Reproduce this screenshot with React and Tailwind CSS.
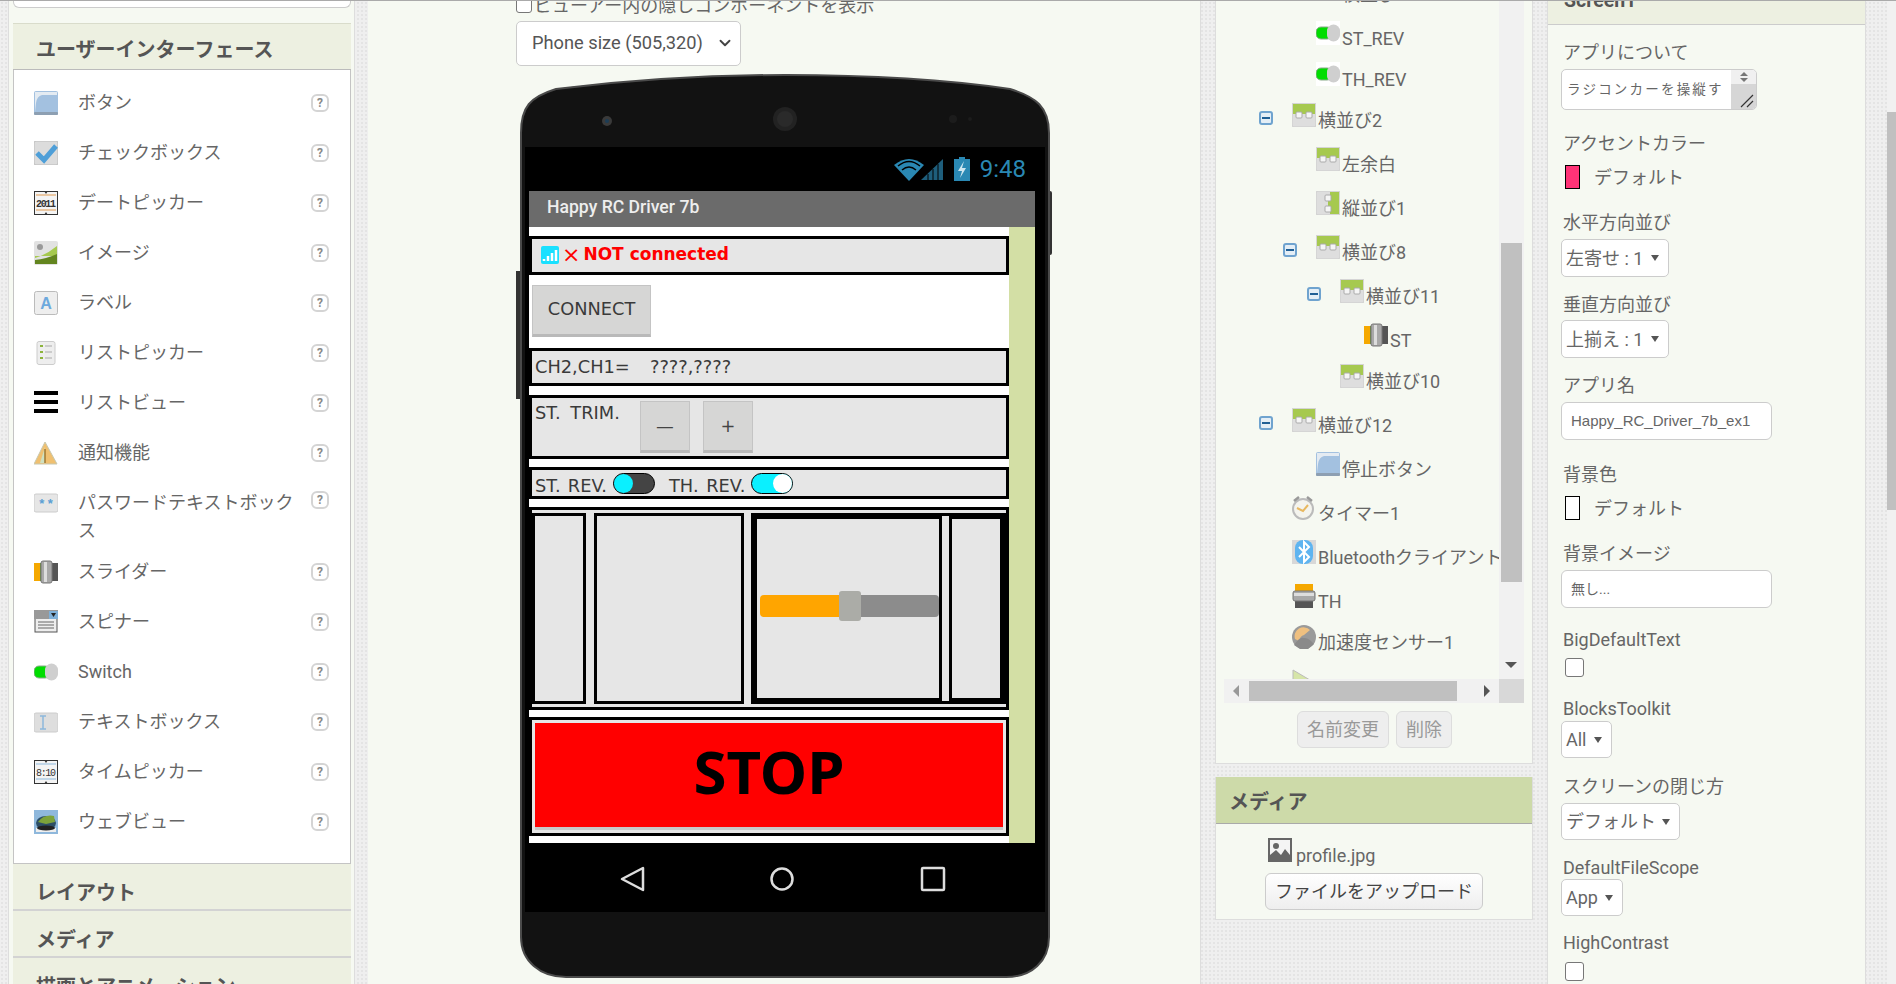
import { ChevronDown } from "lucide-react";

function IconWrap({ children, className = "" }) {
  return (
    <svg viewBox="0 0 24 24" className={`w-6 h-6 shrink-0 ${className}`}>
      {children}
    </svg>
  );
}

const ButtonIcon = () => (
  <IconWrap>
    <rect width="24" height="24" rx="2" fill="#a3c1e0" />
    <path d="M1 1h22v3H8Q3 5 2 12L1 21Z" fill="#e4ebf2" />
    <rect y="21" width="24" height="3" rx="1" fill="#8d9fb2" />
  </IconWrap>
);
const CheckIcon = () => (
  <IconWrap>
    <rect width="24" height="24" rx="2" fill="#dcdcdc" stroke="#bbb" />
    <path d="M3 12l7 7L22 5" fill="none" stroke="#4f9fd8" strokeWidth="5" />
  </IconWrap>
);
const DateIcon = () => (
  <IconWrap>
    <rect x="0.5" y="0.5" width="23" height="23" fill="#f4f4f4" stroke="#333" />
    <path d="M2 4h20M2 19h20" stroke="#e09a50" />
    <path d="M10 0h4l-2 3zM10 24h4l-2-3z" fill="#333" />
    <text x="12" y="16" textAnchor="middle" fontSize="10" fontFamily="Liberation Mono" fontWeight="700" fill="#333" textLength="20">2011</text>
  </IconWrap>
);
const ImageIcon = () => (
  <IconWrap>
    <rect width="24" height="24" rx="2" fill="#e2e2e2" />
    <circle cx="6" cy="6" r="3" fill="#999" />
    <path d="M1 17Q12 14 23 5V15H1Z" fill="#a6c94f" />
    <path d="M1 19Q12 18 23 13V23H1Z" fill="#63851f" />
  </IconWrap>
);
const LabelIcon = () => (
  <IconWrap>
    <rect x="0.5" y="0.5" width="23" height="23" rx="2" fill="#eee" stroke="#bbb" />
    <text x="12" y="18" textAnchor="middle" fontSize="16" fontWeight="700" fontFamily="Liberation Sans" fill="#6da9dd">A</text>
  </IconWrap>
);
const ListPickerIcon = () => (
  <IconWrap>
    <rect x="3" y="0.5" width="18" height="23" rx="2" fill="#eee" stroke="#ccc" />
    <path d="M6 5h3M6 11h3M6 17h3" stroke="#8cb43c" strokeWidth="2" />
    <path d="M11 5h7M11 11h7M11 17h7" stroke="#aaa" />
  </IconWrap>
);
const ListViewIcon = () => (
  <IconWrap>
    <path d="M0 2h24M0 11h24M0 20h24" stroke="#000" strokeWidth="4" />
  </IconWrap>
);
const NotifierIcon = () => (
  <IconWrap>
    <path d="M11 1L0 23h23Z" fill="#f0c070" stroke="#c8c8b0" />
    <path d="M11 6L6 22h5Z" fill="#cfe0c0" />
    <path d="M11 8v14" stroke="#a07830" strokeWidth="1.5" />
  </IconWrap>
);
const PasswordIcon = () => (
  <IconWrap>
    <rect y="3" width="24" height="18" rx="2" fill="#e6e6e6" stroke="#ccc" />
    <text x="12" y="17" textAnchor="middle" fontSize="13" fontWeight="700" fontFamily="Liberation Sans" fill="#5a9fd4">* *</text>
  </IconWrap>
);
const SliderIcon = () => (
  <IconWrap>
    <rect y="3" width="7" height="18" fill="#f5a800" />
    <rect x="6" y="3" width="2" height="18" fill="#6b8c2a" />
    <rect x="15" y="3" width="9" height="18" fill="#555" />
    <rect x="7" y="1" width="11" height="22" rx="2" fill="#a8a8a8" stroke="#777" />
    <rect x="10" y="2" width="3" height="20" fill="#ddd" />
  </IconWrap>
);
const SpinnerIcon = () => (
  <IconWrap>
    <rect x="1" y="1" width="22" height="21" fill="#eee" stroke="#555" />
    <rect y="0" width="24" height="9" fill="#999" />
    <rect x="15" y="1" width="9" height="8" fill="#7fb0d8" />
    <path d="M17 3h5l-2.500 4z" fill="#222" />
    <path d="M4 12h16M4 15h16M4 18h16" stroke="#666" />
  </IconWrap>
);
const SwitchIcon = () => (
  <IconWrap>
    <rect x="0" y="6" width="16" height="12" rx="5" fill="#00dd00" stroke="#8a8" />
    <circle cx="17.500" cy="12" r="6.500" fill="#cfcfcf" />
    <rect x="11" y="3.500" width="13" height="17" rx="6.500" fill="#cfcfcf" />
  </IconWrap>
);
const TextBoxIcon = () => (
  <IconWrap>
    <rect y="3" width="24" height="19" rx="2" fill="#dedede" stroke="#ccc" />
    <path d="M6 6h6M6 19h6M9 6v13" stroke="#8db8dc" strokeWidth="1.500" fill="none" />
  </IconWrap>
);
const TimeIcon = () => (
  <IconWrap>
    <rect x="0.500" y="0.500" width="23" height="23" fill="#f4f4f4" stroke="#333" />
    <path d="M2 4h20M2 19h20" stroke="#8db8dc" />
    <path d="M10 0h4l-2 3zM10 24h4l-2-3z" fill="#333" />
    <text x="12" y="16" textAnchor="middle" fontSize="10" fontFamily="Liberation Mono" fill="#333" textLength="20">8:10</text>
  </IconWrap>
);
const WebIcon = () => (
  <IconWrap>
    <rect width="24" height="24" fill="#8fb8dc" />
    <rect x="2" y="18" width="20" height="4" fill="#eee" />
    <ellipse cx="12" cy="13" rx="10" ry="7" fill="#2d4e66" />
    <path d="M4 12Q10 4 20 6l1 6-9 2z" fill="#7da33a" />
    <ellipse cx="12" cy="18" rx="9" ry="2.500" fill="#222" />
  </IconWrap>
);
const HorizontalIcon = () => (
  <IconWrap>
    <rect width="24" height="24" rx="2" fill="#dedede" stroke="#ccc" />
    <path d="M1 1h22v10H1Z" fill="#a6c94f" />
    <rect x="4" y="9" width="6" height="6" rx="1" fill="#f5f5f5" stroke="#aaa" />
    <rect x="14" y="9" width="6" height="6" rx="1" fill="#f5f5f5" stroke="#aaa" />
  </IconWrap>
);
const VerticalIcon = () => (
  <IconWrap>
    <rect width="24" height="24" rx="2" fill="#dedede" stroke="#ccc" />
    <path d="M14 1h9v22h-9V17h-2V8h2Z" fill="#a6c94f" />
    <rect x="9" y="4" width="6" height="6" rx="1" fill="#f5f5f5" stroke="#aaa" />
    <rect x="9" y="15" width="6" height="6" rx="1" fill="#f5f5f5" stroke="#aaa" />
  </IconWrap>
);
const ClockIcon = () => (
  <IconWrap>
    <circle cx="11" cy="13" r="10" fill="#f4f4ee" stroke="#bbb" strokeWidth="2" />
    <path d="M2 5l5-4M20 5l-5-4" stroke="#999" strokeWidth="2.500" />
    <path d="M5 12l6 3 5-6" fill="none" stroke="#e8b860" strokeWidth="2" />
  </IconWrap>
);
const BluetoothIcon = () => (
  <IconWrap>
    <rect width="24" height="24" fill="#d8d8d8" />
    <rect x="3" width="18" height="24" rx="8" fill="#5eb4f0" />
    <path d="M7 7l10 10-5 5V2l5 5L7 17" fill="none" stroke="#fff" strokeWidth="2" />
  </IconWrap>
);
const VSliderIcon = () => (
  <IconWrap>
    <rect x="3" y="0" width="18" height="7" fill="#f5a800" />
    <rect x="3" y="15" width="18" height="9" fill="#555" />
    <rect x="1" y="7" width="22" height="10" rx="2" fill="#a8a8a8" stroke="#777" />
    <rect x="2" y="9" width="20" height="3" fill="#ddd" />
  </IconWrap>
);
const AccelIcon = () => (
  <IconWrap>
    <circle cx="12" cy="12" r="12" fill="#9a9a9a" />
    <path d="M3 14A9 9 0 0 1 18 5l-6 5Q8 11 7 16Z" fill="#efc080" />
    <path d="M2 20Q8 11 12 13q4-1 10 6l-6 5H8Z" fill="#8a8a8a" />
  </IconWrap>
);
const FolderTriangle = () => (
  <IconWrap>
    <path d="M1 1l22 13v10H1Z" fill="#d6e5a8" stroke="#bbb" />
  </IconWrap>
);
const MediaIcon = () => (
  <IconWrap>
    <rect width="24" height="24" fill="#666" />
    <rect x="2" y="2" width="20" height="20" fill="#f4f4f4" />
    <path d="M2 22V17l6-5 5 5 4-6 5 6v5Z" fill="#666" />
    <circle cx="8" cy="8" r="3" fill="#666" />
  </IconWrap>
);

function Help() {
  return (
    <div className="ml-[11px] w-[18px] h-[18px] rounded-[6px] border-2 border-[#d4d4d4] flex items-center justify-center text-[12px] font-bold text-[#888] leading-none">
      ?
    </div>
  );
}

const palette = [
  { name: "ボタン", Icon: ButtonIcon },
  { name: "チェックボックス", Icon: CheckIcon },
  { name: "デートピッカー", Icon: DateIcon },
  { name: "イメージ", Icon: ImageIcon },
  { name: "ラベル", Icon: LabelIcon },
  { name: "リストピッカー", Icon: ListPickerIcon },
  { name: "リストビュー", Icon: ListViewIcon },
  { name: "通知機能", Icon: NotifierIcon },
  { name: "パスワードテキストボックス", Icon: PasswordIcon, tall: true },
  { name: "スライダー", Icon: SliderIcon },
  { name: "スピナー", Icon: SpinnerIcon },
  { name: "Switch", Icon: SwitchIcon },
  { name: "テキストボックス", Icon: TextBoxIcon },
  { name: "タイムピッカー", Icon: TimeIcon },
  { name: "ウェブビュー", Icon: WebIcon },
];

const tree = [
  { name: "横並び", depth: 1, h: 44, Icon: HorizontalIcon },
  { name: "ST_REV", depth: 1, h: 41, Icon: SwitchIcon, white: true },
  { name: "TH_REV", depth: 1, h: 41, Icon: SwitchIcon, white: true },
  { name: "横並び2", depth: 0, h: 44, Icon: HorizontalIcon, open: true },
  { name: "左余白", depth: 1, h: 44, Icon: HorizontalIcon },
  { name: "縦並び1", depth: 1, h: 44, Icon: VerticalIcon },
  { name: "横並び8", depth: 1, h: 44, Icon: HorizontalIcon, open: true },
  { name: "横並び11", depth: 2, h: 44, Icon: HorizontalIcon, open: true },
  { name: "ST", depth: 3, h: 41, Icon: SliderIcon },
  { name: "横並び10", depth: 2, h: 44, Icon: HorizontalIcon },
  { name: "横並び12", depth: 0, h: 44, Icon: HorizontalIcon, open: true },
  { name: "停止ボタン", depth: 1, h: 44, Icon: ButtonIcon },
  { name: "タイマー1", depth: 0, h: 44, Icon: ClockIcon },
  { name: "Bluetoothクライアント", depth: 0, h: 44, Icon: BluetoothIcon },
  { name: "TH", depth: 0, h: 41, Icon: VSliderIcon },
  { name: "加速度センサー1", depth: 0, h: 44, Icon: AccelIcon },
  { name: "", depth: 0, h: 44, Icon: FolderTriangle },
];

function MinusBox() {
  return (
    <div className="w-[14px] h-[14px] mt-[8px] rounded-[3px] border-2 border-[#6fa3cf] bg-[#e4eef6] flex items-center justify-center">
      <div className="w-[8px] h-[2px] bg-[#1f5f95]" />
    </div>
  );
}

function TreeRow({ item }) {
  const { name, depth, h, Icon, open, white } = item;
  return (
    <div className="flex items-start whitespace-nowrap" style={{ height: h, paddingLeft: 35 + depth * 24 }}>
      <div className="w-[33px] shrink-0">{open && <MinusBox />}</div>
      <div className={white ? "bg-white" : ""}>
        <Icon />
      </div>
      <span className="ml-[2px] leading-[36px]">{name}</span>
    </div>
  );
}

function Label({ children, className = "" }) {
  return <div className={`h-[28px] leading-[30px] pl-[15px] whitespace-nowrap ${className}`}>{children}</div>;
}

function Dropdown({ text, className = "" }) {
  return (
    <div className={`ml-[13px] rounded-[5px] border border-[#ccc] bg-white flex items-center justify-between pl-[4px] pr-[9px] ${className}`}>
      <span className="whitespace-nowrap">{text}</span>
      <svg viewBox="0 0 8 6" className="w-[8px] h-[6px]">
        <path d="M0 0h8L4 6z" fill="#555" />
      </svg>
    </div>
  );
}

function Swatch({ color, className = "" }) {
  return (
    <div className={`flex items-center h-[24px] pl-[17px] ${className}`}>
      <div className={`w-[15px] h-[24px] border border-black ${color}`} />
      <span className="ml-[14px]">デフォルト</span>
    </div>
  );
}

function PhoneButton({ children, className = "" }) {
  return (
    <div className={`flex items-center justify-center bg-[#d6d6d5] border border-[#c4c4c4] border-b-[3px] border-b-[#b9b9b9] text-[#3a3a3a] ${className}`}>
      {children}
    </div>
  );
}

function Toggle({ on }) {
  return (
    <div className={`w-[42px] h-[21px] rounded-full border border-black flex items-center ${on ? "bg-[#0af0ff] justify-end" : "bg-[#444] justify-start"}`}>
      <div className={`w-[19px] h-[19px] rounded-full ${on ? "bg-white" : "bg-[#0af0ff]"}`} />
    </div>
  );
}

function Phone() {
  return (
    <div className="relative w-[540px] h-[910px] mt-[5px]">
      {/* phone body, coordinates taken relative to the 540x910 box */}
      <svg viewBox="0 0 540 910" className="absolute inset-0 w-[540px] h-[910px]">
        <rect x="0" y="200" width="6" height="128" fill="#333" />
        <rect x="530" y="120" width="6" height="64" rx="2" fill="#333" />
        <path
          d="M5 62C5 36 14 26 40 18C130 7 210 4 269 4C340 4 420 7 494 18C520 26 533 36 533 62V866C533 890 516 906 490 906H50C24 906 5 890 5 866Z"
          fill="#121212"
          stroke="#4a4a4a"
          strokeWidth="2"
        />
        <circle cx="91" cy="50" r="5" fill="#3a3a3a" />
        <circle cx="91" cy="50" r="2" fill="#1d3d55" />
        <circle cx="269" cy="48" r="12" fill="#222" />
        <circle cx="269" cy="48" r="8" fill="#2a2a2a" />
        <circle cx="437" cy="48" r="4" fill="#1c1c1c" />
        <circle cx="454" cy="48" r="2" fill="#1c1c1c" />
      </svg>

      <div className="relative ml-[9px] pt-[76px] w-[520px] font-['DejaVu_Sans',sans-serif]">
        <div className="bg-black h-[765px] flex flex-col">
          <div className="h-[44px] flex items-center justify-end pr-[19px] gap-[10px]">
            <svg viewBox="0 0 50 24" className="w-[50px] h-[24px]">
              <path d="M0 8Q15 -4 30 8L15 24Z" fill="#2a88b3" />
              <path d="M4 9Q15 0 26 9M8 13Q15 7 22 13" fill="none" stroke="#000" strokeWidth="1.500" />
              <path d="M27 23l22-21v21Z" fill="#1e5e7c" />
              <path d="M34 23v-6M39 23v-11M44 23v-16" stroke="#000" />
            </svg>
            <svg viewBox="0 0 16 24" className="w-[16px] h-[24px]">
              <path d="M5 0h6v2h5v22H0V2h5Z" fill="#2a88b3" />
              <path d="M10 4L4 14h4l-2 7 6-10H8Z" fill="#cfe6f0" />
            </svg>
            <span className="font-['Roboto',sans-serif] text-[24px] text-[#2a88b3] leading-none">9:48</span>
          </div>

          <div className="ml-[4px] w-[506px]">
            <div className="h-[36px] bg-[#6b6b6b] flex items-center pl-[18px] pb-[3px] font-['Roboto',sans-serif] font-medium text-[17.6px] text-[#eee]">
              Happy RC Driver 7b
            </div>
            <div className="flex h-[616px] text-[17.8px] text-[#3a3a3a]">
              <div className="w-[480px] bg-white flex flex-col">
                <div className="mt-[9px] h-[39px] border-[3px] border-black bg-[#e6e6e6] flex items-center pl-[9px] pb-[1px] font-bold text-[17px] text-[#f00]">
                  <svg viewBox="0 0 18 18" className="w-[18px] h-[18px] mr-[3px]">
                    <rect width="18" height="18" rx="2" fill="#19e0ff" />
                    <path d="M3 15v-2M7 15v-5M11 15v-8M15 15v-11" stroke="#fff" strokeWidth="2.500" />
                  </svg>
                  <span className="font-normal text-[22px] leading-none mr-[3px]">×</span>
                  NOT connected
                </div>
                <PhoneButton className="mt-[10px] ml-[3px] w-[119px] h-[52px] pb-[2px]">CONNECT</PhoneButton>
                <div className="mt-[11px] h-[38px] border-[3px] border-black bg-[#e6e6e6] flex items-center pl-[3px] whitespace-pre [word-spacing:-0.6px]">
                  CH2,CH1=    ????,????
                </div>
                <div className="mt-[9px] h-[64px] border-[3px] border-black bg-[#e6e6e6] flex items-start pl-[3px]">
                  <span className="w-[105px] mt-[2px] whitespace-nowrap [word-spacing:4px]">ST. TRIM.</span>
                  <PhoneButton className="mt-[3px] w-[50px] h-[52px] text-[#444]">—</PhoneButton>
                  <PhoneButton className="mt-[3px] ml-[13px] w-[50px] h-[52px] text-[#444]">+</PhoneButton>
                </div>
                <div className="mt-[8px] h-[32px] border-[3px] border-black bg-[#e6e6e6] flex items-center pl-[3px]">
                  <span className="w-[78px] mt-[6px] whitespace-nowrap [word-spacing:1.5px]">ST. REV.</span>
                  <Toggle />
                  <span className="w-[82px] ml-[14px] mt-[6px] whitespace-nowrap [word-spacing:2px]">TH. REV.</span>
                  <Toggle on />
                </div>
                <div className="mt-[8px] h-[203px] border-[3px] border-black bg-[#e6e6e6] pt-[3px]">
                  <div className="flex h-[191px]">
                    <div className="w-[54px] border-[3px] border-black" />
                    <div className="w-[150px] ml-[8px] border-[3px] border-black" />
                    <div className="w-[255px] ml-[7px] border-[3px] border-black flex">
                      <div className="w-[188px] border-[3px] border-black pt-[76px] pl-[3px]">
                        <div className="relative flex w-[179px] h-[22px]">
                          <div className="w-[79px] bg-[#ffa500] rounded-l-[4px]" />
                          <div className="flex-1 bg-[#8c8c8c] rounded-r-[4px]" />
                          <div className="absolute left-[79px] -top-[4px] w-[22px] h-[30px] rounded-[3px] bg-[#abaca7]" />
                        </div>
                      </div>
                      <div className="w-[54px] ml-[7px] border-[3px] border-black" />
                    </div>
                  </div>
                </div>
                <div className="mt-[7px] h-[119px] border-[3px] border-black bg-[#e6e6e6] p-[3px]">
                  <div className="h-[107px] bg-[#f00] border-b-[3px] border-b-[#c8c8c8] flex items-center justify-center font-['Noto_Sans',sans-serif] font-bold text-[60px] text-black leading-none pb-[9px]">
                    STOP
                  </div>
                </div>
              </div>
              <div className="w-[26px] bg-[#d3dfa5]" />
            </div>
          </div>

          <div className="h-[69px] flex items-center">
            <svg viewBox="0 0 520 69" className="w-[520px] h-[69px]">
              <path d="M118 25v22l-21-11Z" fill="none" stroke="#ddd" strokeWidth="2.500" strokeLinejoin="round" />
              <circle cx="257" cy="36" r="10.500" fill="none" stroke="#ddd" strokeWidth="2.500" />
              <rect x="397" y="25" width="22" height="22" rx="1" fill="none" stroke="#ddd" strokeWidth="2.500" />
            </svg>
          </div>
        </div>
      </div>
    </div>
  );
}

export default function App() {
  return (
    <div className="w-[1896px] h-[984px] overflow-hidden flex border-t border-[#aaa] bg-[#efefef] bg-[radial-gradient(#e4e4e4_1px,transparent_1px)] bg-size-[4px_4px] font-[Roboto,'Noto_Sans_CJK_JP',sans-serif] text-[18px] text-[#666]">
      {/* palette */}
      <div className="ml-[8px] w-[347px] h-[983px] shrink-0 bg-[#f6f9f2] border-x border-[#ddd] pl-[4px] pr-[3px] overflow-hidden">
        <div className="h-[7px] bg-white border border-t-0 border-[#ccc] rounded-b-md" />
        <div className="mt-[15px] h-[47px] bg-[#edf0e1] border-t border-[#d9dccb] border-b border-b-[#bbb] flex items-center pl-[23px] pt-[7px] font-bold text-[20px] text-[#555]">
          ユーザーインターフェース
        </div>
        <div className="h-[794px] bg-white border border-t-0 border-[#c4c4c4] pt-[8px]">
          {palette.map(({ name, Icon, tall }) => (
            <div key={name} className={`flex pl-[20px] ${tall ? "h-[69px] items-start pt-[13px]" : "h-[50px] items-center"}`}>
              <Icon />
              <span className={`ml-[20px] w-[222px] leading-[28px] ${tall ? "-mt-[2px]" : ""}`}>{name}</span>
              <Help />
            </div>
          ))}
        </div>
        {["レイアウト", "メディア", "描画とアニメーション"].map((t) => (
          <div key={t} className="h-[47px] bg-[#edf0e1] border-b-2 border-[#d3d3d3] flex items-center pl-[23px] pt-[12px] font-bold text-[20px] text-[#555] whitespace-nowrap">
            {t}
          </div>
        ))}
      </div>

      {/* viewer */}
      <div className="ml-[13px] w-[833px] h-[983px] shrink-0 bg-[#f6f9f2] border-r border-[#ddd] pl-[148px] overflow-hidden">
        <div className="-mt-[8px] h-[24px] flex items-center">
          <div className="w-[16px] h-[15px] rounded-[3px] border border-[#777] bg-white" />
          <span className="ml-[2px] whitespace-nowrap">ビューアー内の隠しコンポーネントを表示</span>
        </div>
        <div className="mt-[4px] w-[225px] h-[45px] rounded-[5px] border border-[#ccc] bg-white flex items-center justify-between pl-[15px] pr-[6px] pb-[1px] text-[18.25px] text-[#555]">
          Phone size (505,320)
          <ChevronDown size={18} strokeWidth={2.5} className="text-[#444]" />
        </div>
        <Phone />
      </div>

      {/* components */}
      <div className="ml-[14px] w-[318px] shrink-0 flex flex-col">
        <div className="h-[763px] bg-[#f6f9f2] border-x border-b border-[#ddd] pl-[8px] overflow-hidden">
          <div className="flex h-[678px] w-[300px]">
            <div className="w-[275px] overflow-hidden">
              <div className="-mt-[24px]">
                {tree.map((item, i) => (
                  <TreeRow key={i} item={item} />
                ))}
              </div>
            </div>
            <div className="w-[25px] bg-[#f1f1f1] px-[2px] pt-[242px]">
              <div className="h-[339px] bg-[#c0c0c0]" />
              <svg viewBox="0 0 12 6" className="w-[12px] h-[6px] mt-[80px] ml-[4px]">
                <path d="M0 0h12L6 6z" fill="#555" />
              </svg>
            </div>
          </div>
          <div className="flex h-[24px] w-[300px]">
            <div className="w-[275px] bg-[#f1f1f1] flex items-center py-[2px] pl-[9px]">
              <svg viewBox="0 0 6 12" className="w-[6px] h-[12px]">
                <path d="M6 0v12L0 6z" fill="#999" />
              </svg>
              <div className="ml-[10px] w-[208px] h-full bg-[#c0c0c0]" />
              <svg viewBox="0 0 6 12" className="ml-[27px] w-[6px] h-[12px]">
                <path d="M0 0v12l6-6z" fill="#555" />
              </svg>
            </div>
            <div className="w-[25px] bg-[#d8d8d8]" />
          </div>
          <div className="mt-[8px] ml-[73px] flex gap-[7px] text-[#999]">
            <div className="w-[92px] h-[37px] rounded-[6px] border border-[#ddd] bg-[#eee] flex items-center justify-center">名前変更</div>
            <div className="w-[56px] h-[37px] rounded-[6px] border border-[#ddd] bg-[#eee] flex items-center justify-center">削除</div>
          </div>
        </div>
        <div className="mt-[13px] h-[143px] bg-[#f6f9f2] border-x border-b border-[#ddd]">
          <div className="h-[47px] bg-[#cddaa9] border-b border-[#aaa] flex items-center pl-[13px] pt-[4px] font-bold text-[20px] text-[#555]">
            メディア
          </div>
          <div className="mt-[14px] ml-[52px] flex items-start">
            <MediaIcon />
            <span className="ml-[4px] mt-[4px] leading-[28px]">profile.jpg</span>
          </div>
          <div className="mt-[3px] ml-[49px] w-[218px] h-[37px] rounded-[6px] border border-[#ccc] bg-linear-to-b from-white to-[#eee] flex items-center justify-center text-[#444]">
            ファイルをアップロード
          </div>
        </div>
      </div>

      {/* properties */}
      <div className="ml-[14px] w-[319px] h-[983px] shrink-0 bg-[#f6f9f2] border-x border-[#ddd] overflow-hidden">
        <div className="h-[24px] bg-[#edf0e1] border-b border-[#ccc] flex items-start pl-[16px] font-bold text-[19.5px] text-[#555] overflow-hidden">
          <span className="-mt-[14px] leading-[28px]">Screen1</span>
        </div>
        <Label className="mt-[13px]">アプリについて</Label>
        <div className="mt-[3px] ml-[13px] w-[196px] h-[41px] rounded-[5px] border border-[#ccc] bg-white flex overflow-hidden">
          <span className="pl-[5px] w-[169px] text-[13.5px] tracking-[2.2px] leading-[39px] whitespace-nowrap overflow-hidden">ラジコンカーを操縦す</span>
          <div className="flex-1 flex flex-col">
            <div className="h-[14px] bg-[#f0f0f0] flex flex-col items-center justify-center gap-[1px]">
              <svg viewBox="0 0 8 10" className="w-[8px] h-[10px]">
                <path d="M0 4L4 0l4 4ZM0 6h8L4 10Z" fill="#777" />
              </svg>
            </div>
            <div className="flex-1 bg-[#d6d6d6] flex items-end justify-end pr-[2px] pb-[1px]">
              <svg viewBox="0 0 14 14" className="w-[14px] h-[14px]">
                <path d="M1 13L13 1M7 13l6-6" stroke="#333" strokeWidth="1.200" />
              </svg>
            </div>
          </div>
        </div>
        <Label className="mt-[19px]">アクセントカラー</Label>
        <Swatch color="bg-[#ff3377]" className="mt-[8px]" />
        <Label className="mt-[19px]">水平方向並び</Label>
        <Dropdown text="左寄せ : 1" className="mt-[3px] w-[108px] h-[38px]" />
        <Label className="mt-[13px]">垂直方向並び</Label>
        <Dropdown text="上揃え : 1" className="mt-[2px] w-[108px] h-[38px]" />
        <Label className="mt-[13px]">アプリ名</Label>
        <div className="mt-[3px] ml-[13px] w-[211px] h-[38px] rounded-[6px] border border-[#ccc] bg-white flex items-center pl-[9px] font-['Liberation_Sans',sans-serif] text-[15px]">
          Happy_RC_Driver_7b_ex1
        </div>
        <Label className="mt-[20px]">背景色</Label>
        <Swatch color="bg-white" className="mt-[8px]" />
        <Label className="mt-[19px]">背景イメージ</Label>
        <div className="mt-[3px] ml-[13px] w-[211px] h-[38px] rounded-[6px] border border-[#ccc] bg-white flex items-center pl-[9px] text-[14px]">
          無し...
        </div>
        <Label className="mt-[17px]">BigDefaultText</Label>
        <div className="mt-[5px] ml-[17px] w-[19px] h-[19px] rounded-[3px] border border-[#777] bg-white" />
        <Label className="mt-[17px]">BlocksToolkit</Label>
        <Dropdown text="All" className="-mt-[1px] w-[51px] h-[37px]" />
        <Label className="mt-[14px]">スクリーンの閉じ方</Label>
        <Dropdown text="デフォルト" className="mt-[3px] w-[119px] h-[37px]" />
        <Label className="mt-[13px]">DefaultFileScope</Label>
        <Dropdown text="App" className="-mt-[2px] w-[62px] h-[37px]" />
        <Label className="mt-[12px]">HighContrast</Label>
        <div className="mt-[6px] ml-[17px] w-[19px] h-[19px] rounded-[3px] border border-[#777] bg-white" />
      </div>

      {/* page scrollbar */}
      <div className="ml-[21px] w-[9px] h-[983px] bg-[#f1f1f1] pt-[111px]">
        <div className="h-[398px] bg-[#c0c0c0]" />
      </div>
    </div>
  );
}
